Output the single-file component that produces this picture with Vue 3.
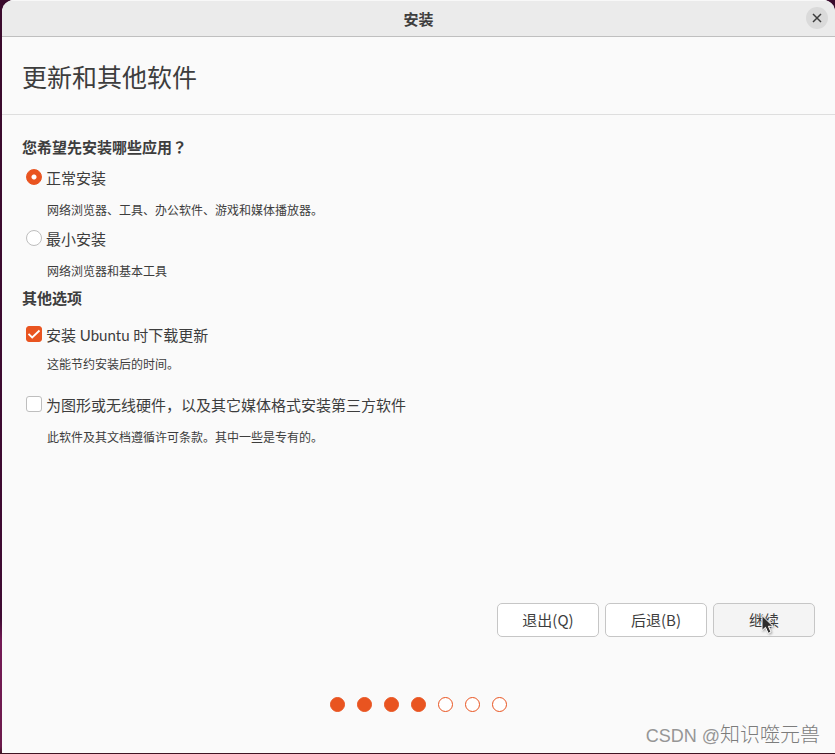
<script setup>
import { ref } from 'vue'

const mode = ref('normal')
const updates = ref(true)
const thirdParty = ref(false)

const modes = [
  { id: 'normal', label: '正常安装', note: '网络浏览器、工具、办公软件、游戏和媒体播放器。' },
  { id: 'minimal', label: '最小安装', note: '网络浏览器和基本工具' },
]
const steps = 7
const done = 4
</script>

<template>
  <div class="desktop">
    <div class="window">
      <header class="titlebar">
        <span class="title">安装</span>
        <button class="close" type="button" aria-label="关闭">
          <svg viewBox="0 0 22 22" width="22" height="22">
            <path d="M7 7l8 8M15 7l-8 8" fill="none" stroke="#3d3d3d" stroke-width="1.500" />
          </svg>
        </button>
      </header>

      <div class="heading"><h1>更新和其他软件</h1></div>

      <main class="content">
        <h2>您希望先安装哪些应用<span class="mark">？</span></h2>
        <div class="modes">
          <div v-for="m in modes" :key="m.id" class="mode">
            <label class="option">
              <input v-model="mode" type="radio" name="mode" :value="m.id" />
              <span>{{ m.label }}</span>
            </label>
            <p class="note">{{ m.note }}</p>
          </div>
        </div>

        <h2 class="other">其他选项</h2>
        <label class="option">
          <input v-model="updates" type="checkbox" />
          <span>安装 Ubuntu 时下载更新</span>
        </label>
        <p class="note near">这能节约安装后的时间。</p>
        <label class="option third">
          <input v-model="thirdParty" type="checkbox" />
          <span>为图形或无线硬件，以及其它媒体格式安装第三方软件</span>
        </label>
        <p class="note">此软件及其文档遵循许可条款。其中一些是专有的。</p>
      </main>

      <div class="actions">
        <button type="button">退出(Q)</button>
        <button type="button">后退(B)</button>
        <button type="button" class="hovered">
          继续
          <svg class="cursor" viewBox="0 0 16 22" width="16" height="22">
            <path
              d="M2 1.500V16.500L5.500 13.300L8.200 19.300L11 18L8.400 12.300H13Z"
              fill="#2d2d2d"
              stroke="#fff"
              stroke-width="1"
              stroke-linejoin="round"
            />
          </svg>
        </button>
      </div>

      <div class="dots">
        <span v-for="n in steps" :key="n" class="dot" :class="{ filled: n <= done }"></span>
      </div>

      <div class="watermark"><span class="site">CSDN @</span>知识噬元兽</div>
    </div>
  </div>
</template>

<style>
body {
  margin: 0;
}
</style>

<style scoped>
.desktop {
  box-sizing: border-box;
  min-height: 100vh;
  padding: 0 0 1px 2px;
  display: flex;
  background: linear-gradient(#3a0a2c 0%, #3f0b33 82%, #741a56 85%, #6c1a4c 99%, #3c1420 100%);
  font-family: "Noto Sans CJK SC", sans-serif;
  color: #3d3d3d;
}
.window {
  position: relative;
  flex: 1;
  display: flex;
  flex-direction: column;
  background: #fafafa;
  border-radius: 12px 12px 0 0;
  overflow: hidden;
}
.titlebar {
  box-sizing: border-box;
  height: 37px;
  padding: 0 7px;
  display: grid;
  grid-template-columns: 1fr auto 1fr;
  align-items: center;
  background: #ebebeb;
  border-bottom: 1px solid #bfbfbf;
  box-shadow: inset 0 1px #f8f8f8;
}
.title {
  grid-column: 2;
  padding-top: 2px;
  font-size: 15px;
  line-height: 24px;
  font-weight: 700;
}
.close {
  justify-self: end;
  width: 22px;
  height: 22px;
  padding: 0;
  border: 0;
  border-radius: 50%;
  background: #dadada;
}
.close svg {
  display: block;
}
.heading {
  padding: 21px 20px 19px;
  border-bottom: 1px solid #dedede;
}
h1 {
  margin: 0;
  font-size: 25px;
  line-height: 37px;
  font-weight: 400;
}
.content {
  flex: 1;
  padding: 20px;
}
h2 {
  margin: 0;
  font-size: 15px;
  line-height: 24px;
  font-weight: 700;
}
.mark {
  font-family: "Noto Sans CJK TC", sans-serif;
}
.modes {
  display: grid;
  gap: 7px;
  margin-top: 7px;
}
.other {
  margin: 5px 0 13px;
}
.option {
  display: flex;
  align-items: center;
  gap: 4px;
  width: fit-content;
  padding-left: 4px;
  font-family: Lato, "Noto Sans CJK SC", sans-serif;
  font-size: 15px;
  line-height: 24px;
}
.option input {
  appearance: none;
  box-sizing: border-box;
  width: 16px;
  height: 16px;
  margin: 0 0 2px;
  border: 1px solid #bebebe;
  background: #fff;
}
.option.third {
  margin-top: 19px;
}
.option input[type="radio"] {
  border-radius: 50%;
}
.option input[type="checkbox"] {
  border-radius: 3px;
}
.option input:checked {
  border-color: #e95420;
  background: #e95420;
}
.option input[type="radio"]:checked {
  background: radial-gradient(circle, #fff 2px, #e95420 3px);
}
.option input[type="checkbox"]:checked {
  background: #e95420 url("data:image/svg+xml,%3Csvg xmlns='http://www.w3.org/2000/svg' viewBox='0 0 14 14'%3E%3Cpath d='M1.500 6.800l3.700 3.700 7.300-7' fill='none' stroke='white' stroke-width='1.800'/%3E%3C/svg%3E") center / 14px 14px no-repeat;
}
.note {
  margin: 10px 0 0 25px;
  font-size: 12px;
  line-height: 20px;
}
.note.near {
  margin-top: 7px;
}
.actions {
  display: flex;
  justify-content: flex-end;
  gap: 6px;
  padding: 0 20px;
}
.actions button {
  position: relative;
  width: 102px;
  height: 34px;
  padding: 0 0 2px;
  border: 1px solid #c6c6c6;
  border-radius: 5px;
  background: #fff;
  color: inherit;
  font: inherit;
  font-size: 15px;
}
.actions .hovered {
  background: #f4f4f4;
}
.cursor {
  position: absolute;
  left: 46px;
  top: 10px;
  filter: drop-shadow(1px 1px 1px #0005);
}
.dots {
  display: flex;
  justify-content: center;
  gap: 12px;
  padding: 60px 0 41px;
}
.dot {
  box-sizing: border-box;
  width: 15px;
  height: 15px;
  border: 1px solid #e95420;
  border-radius: 50%;
  background: #fff;
}
.dot.filled {
  background: #e95420;
}
.watermark {
  position: absolute;
  right: 15px;
  bottom: 3px;
  font-size: 20px;
  line-height: 28px;
  font-weight: 300;
  color: #7c7c7c;
}
.site {
  font-family: "Liberation Sans", sans-serif;
  font-size: 18px;
  color: #969696;
}
</style>
